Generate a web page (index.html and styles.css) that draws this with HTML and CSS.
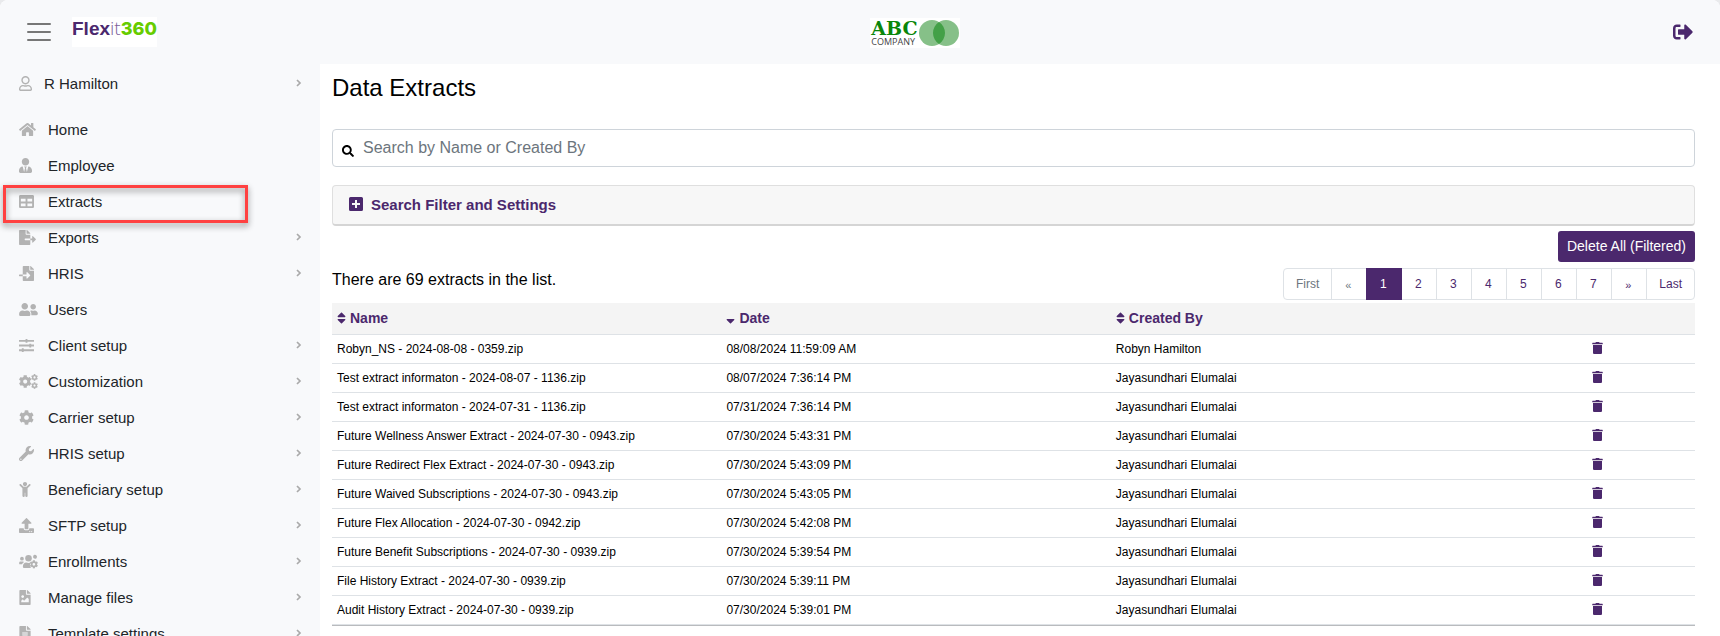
FILE: index.html
```html
<!DOCTYPE html>
<html lang="en">
<head>
<meta charset="utf-8">
<meta name="viewport" content="width=device-width, initial-scale=1">
<title>Data Extracts</title>
<link rel="stylesheet" href="styles.css">
</head>
<body>
<svg class="sprite" aria-hidden="true">
  <symbol id="i-user" viewBox="0 0 448 512"><path d="M313.6 304c-28.7 0-42.5 16-89.6 16-47.1 0-60.8-16-89.6-16C60.2 304 0 364.2 0 438.4V464c0 26.5 21.5 48 48 48h352c26.5 0 48-21.5 48-48v-25.6c0-74.2-60.2-134.4-134.4-134.4zM400 464H48v-25.6c0-47.6 38.8-86.4 86.4-86.4 14.6 0 38.3 16 89.6 16 51.7 0 74.9-16 89.6-16 47.6 0 86.4 38.8 86.4 86.4V464zM224 288c79.5 0 144-64.5 144-144S303.5 0 224 0 80 64.5 80 144s64.5 144 144 144zm0-240c52.9 0 96 43.1 96 96s-43.1 96-96 96-96-43.1-96-96 43.1-96 96-96z"/></symbol>
  <symbol id="i-home" viewBox="0 0 576 512"><path d="M280.37 148.26L96 300.11V464a16 16 0 0 0 16 16l112.06-.29a16 16 0 0 0 15.92-16V368a16 16 0 0 1 16-16h64a16 16 0 0 1 16 16v95.64a16 16 0 0 0 16 16.05L464 480a16 16 0 0 0 16-16V300L295.67 148.26a12.19 12.19 0 0 0-15.3 0zM571.6 251.47L488 182.56V44.05a12 12 0 0 0-12-12h-56a12 12 0 0 0-12 12v72.61L318.47 43a48 48 0 0 0-61 0L4.34 251.47a12 12 0 0 0-1.6 16.9l25.5 31A12 12 0 0 0 45.15 301l235.22-193.74a12.19 12.19 0 0 1 15.3 0L530.9 301a12 12 0 0 0 16.9-1.6l25.5-31a12 12 0 0 0-1.7-16.93z"/></symbol>
  <symbol id="i-tie" viewBox="0 0 448 512"><path d="M224 256c70.7 0 128-57.3 128-128S294.7 0 224 0 96 57.3 96 128s57.3 128 128 128zm95.8 32.6L272 480l-32-136 32-56h-96l32 56-32 136-47.8-191.4C56.9 292 0 350.3 0 422.4V464c0 26.5 21.5 48 48 48h352c26.5 0 48-21.5 48-48v-41.6c0-72.1-56.9-130.4-128.2-133.8z"/></symbol>
  <symbol id="i-table" viewBox="0 0 512 512"><path d="M464 32H48C21.49 32 0 53.49 0 80v352c0 26.51 21.49 48 48 48h416c26.51 0 48-21.49 48-48V80c0-26.51-21.49-48-48-48zM224 416H64v-96h160v96zm0-160H64v-96h160v96zm224 160H288v-96h160v96zm0-160H288v-96h160v96z"/></symbol>
  <symbol id="i-export" viewBox="0 0 576 512"><path d="M384 121.9c0-6.3-2.5-12.4-7-16.9L279.1 7c-4.5-4.5-10.6-7-17-7H256v128h128zM571 308l-95.7-96.4c-10.1-10.1-27.4-3-27.4 11.3V288h-64v64h64v65.2c0 14.3 17.3 21.4 27.4 11.3L571 332c6.6-6.6 6.6-17.4 0-24zm-379 28v-32c0-8.8 7.2-16 16-16h176V160H248c-13.2 0-24-10.8-24-24V0H24C10.7 0 0 10.7 0 24v464c0 13.3 10.7 24 24 24h336c13.3 0 24-10.7 24-24V352H208c-8.8 0-16-7.2-16-16z"/></symbol>
  <symbol id="i-import" viewBox="0 0 512 512"><path d="M16 288c-8.8 0-16 7.2-16 16v32c0 8.8 7.2 16 16 16h112v-64zm489-183L407.1 7c-4.5-4.5-10.6-7-17-7H384v128h128v-6.1c0-6.3-2.5-12.4-7-16.9zm-153 31V0H152c-13.3 0-24 10.7-24 24v264h128v-65.2c0-14.3 17.3-21.4 27.4-11.3L379 308c6.6 6.7 6.6 17.4 0 24l-95.7 96.4c-10.1 10.1-27.4 3-27.4-11.3V352H128v136c0 13.3 10.7 24 24 24h336c13.3 0 24-10.7 24-24V160H376c-13.2 0-24-10.8-24-24z"/></symbol>
  <symbol id="i-users" viewBox="0 0 640 512"><path d="M192 256c61.9 0 112-50.1 112-112S253.9 32 192 32 80 82.1 80 144s50.1 112 112 112zm76.8 32h-8.3c-20.8 10-43.9 16-68.5 16s-47.6-6-68.5-16h-8.3C51.6 288 0 339.6 0 403.2V432c0 26.5 21.5 48 48 48h288c26.5 0 48-21.5 48-48v-28.8c0-63.6-51.6-115.2-115.2-115.2zM480 256c53 0 96-43 96-96s-43-96-96-96-96 43-96 96 43 96 96 96zm48 32h-3.8c-13.9 4.8-28.6 8-44.2 8s-30.3-3.2-44.2-8H432c-20.4 0-39.2 5.9-55.7 15.4 24.4 26.3 39.7 61.2 39.7 99.8v38.4c0 2.2-.5 4.3-.6 6.4H592c26.5 0 48-21.5 48-48 0-61.9-50.1-112-112-112z"/></symbol>
  <symbol id="i-sliders" viewBox="0 0 512 512"><path d="M0 64h224V32h64v32h224v64H288v32h-64v-32H0zM0 224h352v-32h64v32h96v64h-96v32h-64v-32H0zM0 384h96v-32h64v32h352v64H160v32H96v-32H0z"/></symbol>
  <symbol id="i-cog" viewBox="0 0 512 512"><path id="p-cog" d="M487.4 315.7l-42.6-24.6c4.3-23.2 4.3-47 0-70.2l42.6-24.6c4.9-2.8 7.1-8.6 5.5-14-11.1-35.6-30-67.8-54.7-94.6-3.8-4.1-10-5.1-14.8-2.3L380.8 110c-17.9-15.4-38.5-27.3-60.8-35.1V25.8c0-5.6-3.9-10.5-9.4-11.7-36.7-8.2-74.3-7.8-109.2 0-5.5 1.2-9.4 6.1-9.4 11.7V75c-22.2 7.9-42.8 19.8-60.8 35.1L88.7 85.5c-4.9-2.8-11-1.9-14.8 2.3-24.7 26.7-43.6 58.9-54.7 94.6-1.7 5.4.6 11.2 5.5 14L67.3 221c-4.3 23.2-4.3 47 0 70.2l-42.6 24.6c-4.9 2.8-7.1 8.6-5.5 14 11.1 35.6 30 67.8 54.7 94.6 3.8 4.1 10 5.1 14.8 2.3l42.6-24.6c17.9 15.4 38.5 27.3 60.8 35.1v49.2c0 5.6 3.9 10.5 9.4 11.7 36.7 8.2 74.3 7.8 109.2 0 5.5-1.2 9.4-6.1 9.4-11.7v-49.2c22.2-7.9 42.8-19.8 60.8-35.1l42.6 24.6c4.9 2.8 11 1.9 14.8-2.3 24.7-26.7 43.6-58.9 54.7-94.6 1.5-5.5-.7-11.3-5.6-14.1zM256 336c-44.1 0-80-35.9-80-80s35.9-80 80-80 80 35.9 80 80-35.9 80-80 80z"/></symbol>
  <symbol id="i-cogs" viewBox="0 0 640 512"><use href="#p-cog" transform="translate(-15 32) scale(.87)"/><use href="#p-cog" transform="translate(408 0) scale(.46)"/><use href="#p-cog" transform="translate(408 278) scale(.46)"/></symbol>
  <symbol id="i-wrench" viewBox="0 0 512 512"><path d="M507.73 109.1c-2.24-9.03-13.54-12.09-20.12-5.51l-74.36 74.36-67.88-11.31-11.31-67.88 74.36-74.36c6.62-6.62 3.43-17.9-5.66-20.16-47.38-11.74-99.55.91-136.58 37.93-39.64 39.64-50.55 97.1-34.05 147.2L18.74 402.76c-24.99 24.99-24.99 65.51 0 90.5 24.99 24.99 65.51 24.99 90.5 0l213.21-213.21c50.12 16.71 107.47 5.68 147.37-34.22 37.07-37.07 49.7-89.32 37.91-136.73zM64 472c-13.25 0-24-10.75-24-24 0-13.26 10.75-24 24-24s24 10.74 24 24c0 13.25-10.75 24-24 24z"/></symbol>
  <symbol id="i-child" viewBox="0 0 384 512"><path d="M120 72c0-39.765 32.235-72 72-72s72 32.235 72 72c0 39.764-32.235 72-72 72s-72-32.236-72-72zm254.627 1.373c-12.496-12.497-32.758-12.497-45.254 0L242.745 160H141.254L54.627 73.373c-12.496-12.497-32.758-12.497-45.254 0-12.497 12.497-12.497 32.758 0 45.255L104 213.254V480c0 17.673 14.327 32 32 32h16c17.673 0 32-14.327 32-32V368h16v112c0 17.673 14.327 32 32 32h16c17.673 0 32-14.327 32-32V213.254l94.627-94.627c12.497-12.496 12.497-32.757 0-45.254z"/></symbol>
  <symbol id="i-upload" viewBox="0 0 512 512"><path d="M296 384h-80c-13.3 0-24-10.7-24-24V192h-87.7c-17.8 0-26.7-21.5-14.1-34.1L242.3 5.7c7.5-7.5 19.8-7.5 27.3 0l152.2 152.2c12.6 12.6 3.7 34.1-14.1 34.1H320v168c0 13.3-10.7 24-24 24zm216-8v112c0 13.3-10.7 24-24 24H24c-13.3 0-24-10.7-24-24V376c0-13.3 10.7-24 24-24h136v8c0 30.9 25.1 56 56 56h80c30.9 0 56-25.1 56-56v-8h136c13.3 0 24 10.7 24 24zm-124 88c0-11-9-20-20-20s-20 9-20 20 9 20 20 20 20-9 20-20zm64 0c0-11-9-20-20-20s-20 9-20 20 9 20 20 20 20-9 20-20z"/></symbol>
  <symbol id="i-userscog" viewBox="0 0 640 512"><circle cx="96" cy="160" r="64"/><circle cx="320" cy="144" r="112"/><path d="M0 320c0-53 20-64 64-64h64c18 0 34 7 45 19-40 22-68 61-74 77H32c-18 0-32-14-32-32z"/><path d="M480 64a64 64 0 0 1 122 60c-10 26-30 36-58 36-30-4-60-14-64-40z"/><path d="M128 432c0-86 40-144 115-144 47 22 107 22 154 0-40 60-40 140 10 192H176c-26 0-48-20-48-48z"/><use href="#p-cog" transform="translate(358 206) scale(.57)"/></symbol>
  <symbol id="i-image" viewBox="0 0 384 512"><path d="M384 121.941V128H256V0h6.059a24 24 0 0 1 16.97 7.029l97.941 97.941a24.002 24.002 0 0 1 7.03 16.971zM248 160c-13.2 0-24-10.8-24-24V0H24C10.745 0 0 10.745 0 24v464c0 13.255 10.745 24 24 24h336c13.255 0 24-10.745 24-24V160H248zm-135.455 16c26.51 0 48 21.49 48 48s-21.49 48-48 48-48-21.49-48-48 21.491-48 48-48zm208 240h-256l.485-48.485L104.545 328c4.686-4.686 11.799-4.201 16.485.485L160.545 368 264.06 264.485c4.686-4.686 12.284-4.686 16.971 0L320.545 304v112z"/></symbol>
  <symbol id="i-file" viewBox="0 0 384 512"><path d="M224 136V0H24C10.7 0 0 10.7 0 24v464c0 13.3 10.7 24 24 24h336c13.3 0 24-10.7 24-24V160H248c-13.2 0-24-10.8-24-24zm64 236c0 6.6-5.4 12-12 12H108c-6.6 0-12-5.4-12-12v-8c0-6.6 5.4-12 12-12h168c6.6 0 12 5.4 12 12v8zm0-64c0 6.6-5.4 12-12 12H108c-6.6 0-12-5.4-12-12v-8c0-6.6 5.4-12 12-12h168c6.6 0 12 5.4 12 12v8zm0-72v8c0 6.6-5.4 12-12 12H108c-6.6 0-12-5.4-12-12v-8c0-6.6 5.4-12 12-12h168c6.6 0 12 5.4 12 12zm96-114.1v6.1H256V0h6.1c6.4 0 12.5 2.5 17 7l97.9 98c4.5 4.5 7 10.6 7 16.9z"/></symbol>
  <symbol id="i-chev" viewBox="0 0 6 8"><path d="M1 1l3 3-3 3" fill="none" stroke="currentColor" stroke-width="1.7"/></symbol>
  <symbol id="i-out" viewBox="0 0 512 512"><path d="M497 273L329 441c-15 15-41 4.5-41-17v-96H152c-13.3 0-24-10.7-24-24v-96c0-13.3 10.7-24 24-24h136V88c0-21.4 25.9-32 41-17l168 168c9.3 9.4 9.3 24.6 0 34zM192 436v-40c0-6.6-5.4-12-12-12H96c-17.7 0-32-14.3-32-32V160c0-17.7 14.3-32 32-32h84c6.6 0 12-5.4 12-12V76c0-6.6-5.4-12-12-12H96c-53 0-96 43-96 96v192c0 53 43 96 96 96h84c6.6 0 12-5.4 12-12z"/></symbol>
  <symbol id="i-search" viewBox="0 0 512 512"><path d="M505 442.7L405.3 343c-4.5-4.5-10.6-7-17-7H372c27.6-35.3 44-79.7 44-128C416 93.1 322.9 0 208 0S0 93.1 0 208s93.1 208 208 208c48.3 0 92.7-16.4 128-44v16.3c0 6.4 2.5 12.5 7 17l99.7 99.7c9.4 9.4 24.6 9.4 33.9 0l28.3-28.3c9.4-9.4 9.4-24.6.1-34zM208 336c-70.7 0-128-57.2-128-128 0-70.7 57.2-128 128-128 70.7 0 128 57.2 128 128 0 70.7-57.2 128-128 128z"/></symbol>
  <symbol id="i-plus" viewBox="0 0 14 14"><path fill-rule="evenodd" d="M1.500 0h11a1.500 1.500 0 0 1 1.500 1.500v11a1.500 1.500 0 0 1-1.500 1.500h-11a1.500 1.500 0 0 1-1.500-1.500v-11a1.500 1.500 0 0 1 1.500-1.500zM6 3v3H3v2h3v3h2V8h3V6H8V3z"/></symbol>
  <symbol id="i-sort" viewBox="0 0 320 512"><path d="M41 288h238c21.4 0 32.1 25.9 17 41L177 448c-9.4 9.4-24.6 9.4-33.9 0L24 329c-15.1-15.1-4.4-41 17-41zm255-105L177 64c-9.4-9.4-24.6-9.4-33.9 0L24 183c-15.1 15.1-4.4 41 17 41h238c21.4 0 32.1-25.9 17-41z"/></symbol>
  <symbol id="i-sortdown" viewBox="0 0 320 512"><path d="M41 288h238c21.4 0 32.1 25.9 17 41L177 448c-9.4 9.4-24.6 9.4-33.9 0L24 329c-15.1-15.1-4.4-41 17-41z"/></symbol>
  <symbol id="i-trash" viewBox="0 0 448 512"><path d="M32 464a48 48 0 0 0 48 48h288a48 48 0 0 0 48-48V128H32zM432 32H312l-9.4-18.7A24 24 0 0 0 281.1 0H166.8a23.72 23.72 0 0 0-21.4 13.3L136 32H16A16 16 0 0 0 0 48v32a16 16 0 0 0 16 16h416a16 16 0 0 0 16-16V48a16 16 0 0 0-16-16z"/></symbol>
</svg>

<div class="app">
  <header class="topbar">
    <div class="brand-group">
      <button class="menu-btn" type="button" aria-label="Toggle menu"><span></span><span></span><span></span></button>
      <a class="brand" href="#"><span class="brand-flex">Flex</span><span class="brand-it">it</span><span class="brand-360">360</span></a>
    </div>
    <div class="client">
      <div class="client-name"><span class="client-abc">ABC</span><span class="client-company">COMPANY</span></div>
      <svg class="client-mark" viewBox="0 0 40 26" aria-hidden="true"><circle cx="13" cy="13" r="13"/><circle cx="27" cy="13" r="13"/><path d="M20 2.05a13 13 0 0 1 0 21.9a13 13 0 0 1 0-21.9z"/></svg>
    </div>
    <a class="logout" href="#" aria-label="Log out"><svg class="icon-out"><use href="#i-out"/></svg></a>
  </header>

  <div class="body">
    <nav class="sidebar">
      <a class="nav-item profile" href="#"><svg class="nav-icon w13"><use href="#i-user"/></svg><span class="nav-label">R Hamilton</span><svg class="chev"><use href="#i-chev"/></svg></a>
      <a class="nav-item" href="#"><svg class="nav-icon w17"><use href="#i-home"/></svg><span class="nav-label">Home</span></a>
      <a class="nav-item" href="#"><svg class="nav-icon w13"><use href="#i-tie"/></svg><span class="nav-label">Employee</span></a>
      <a class="nav-item marked" href="#"><svg class="nav-icon w15"><use href="#i-table"/></svg><span class="nav-label">Extracts</span></a>
      <a class="nav-item" href="#"><svg class="nav-icon w17"><use href="#i-export"/></svg><span class="nav-label">Exports</span><svg class="chev"><use href="#i-chev"/></svg></a>
      <a class="nav-item" href="#"><svg class="nav-icon w15"><use href="#i-import"/></svg><span class="nav-label">HRIS</span><svg class="chev"><use href="#i-chev"/></svg></a>
      <a class="nav-item" href="#"><svg class="nav-icon w19"><use href="#i-users"/></svg><span class="nav-label">Users</span></a>
      <a class="nav-item" href="#"><svg class="nav-icon w15"><use href="#i-sliders"/></svg><span class="nav-label">Client setup</span><svg class="chev"><use href="#i-chev"/></svg></a>
      <a class="nav-item" href="#"><svg class="nav-icon w19"><use href="#i-cogs"/></svg><span class="nav-label">Customization</span><svg class="chev"><use href="#i-chev"/></svg></a>
      <a class="nav-item" href="#"><svg class="nav-icon w15"><use href="#i-cog"/></svg><span class="nav-label">Carrier setup</span><svg class="chev"><use href="#i-chev"/></svg></a>
      <a class="nav-item" href="#"><svg class="nav-icon w15"><use href="#i-wrench"/></svg><span class="nav-label">HRIS setup</span><svg class="chev"><use href="#i-chev"/></svg></a>
      <a class="nav-item" href="#"><svg class="nav-icon w11"><use href="#i-child"/></svg><span class="nav-label">Beneficiary setup</span><svg class="chev"><use href="#i-chev"/></svg></a>
      <a class="nav-item" href="#"><svg class="nav-icon w15"><use href="#i-upload"/></svg><span class="nav-label">SFTP setup</span><svg class="chev"><use href="#i-chev"/></svg></a>
      <a class="nav-item" href="#"><svg class="nav-icon w19"><use href="#i-userscog"/></svg><span class="nav-label">Enrollments</span><svg class="chev"><use href="#i-chev"/></svg></a>
      <a class="nav-item" href="#"><svg class="nav-icon w11"><use href="#i-image"/></svg><span class="nav-label">Manage files</span><svg class="chev"><use href="#i-chev"/></svg></a>
      <a class="nav-item" href="#"><svg class="nav-icon w11"><use href="#i-file"/></svg><span class="nav-label">Template settings</span><svg class="chev"><use href="#i-chev"/></svg></a>
    </nav>

    <main class="content">
      <h1>Data Extracts</h1>
      <label class="search"><svg class="icon-search" aria-hidden="true"><use href="#i-search"/></svg><input type="text" aria-label="Search by Name or Created By" placeholder="Search by Name or Created By"></label>
      <button class="filter" type="button"><svg class="icon-plus" aria-hidden="true"><use href="#i-plus"/></svg><span>Search Filter and Settings</span></button>
      <div class="actions"><button class="delete-all" type="button">Delete All (Filtered)</button></div>
      <div class="list-head">
        <p class="count">There are 69 extracts in the list.</p>
        <nav class="pager" aria-label="Pages">
          <a class="off" href="#">First</a><a class="off arrow" href="#">«</a><a class="on" href="#">1</a><a href="#">2</a><a href="#">3</a><a href="#">4</a><a href="#">5</a><a href="#">6</a><a href="#">7</a><a class="arrow" href="#">»</a><a href="#">Last</a>
        </nav>
      </div>
      <table class="extracts">
        <colgroup><col class="wide"><col class="wide"><col class="wide"><col></colgroup>
        <thead><tr>
          <th><a href="#"><svg class="icon-sort"><use href="#i-sort"/></svg>Name</a></th>
          <th><a href="#"><svg class="icon-sort"><use href="#i-sortdown"/></svg>Date</a></th>
          <th><a href="#"><svg class="icon-sort"><use href="#i-sort"/></svg>Created By</a></th>
          <th></th>
        </tr></thead>
        <tbody>
          <tr><td>Robyn_NS - 2024-08-08 - 0359.zip</td><td>08/08/2024 11:59:09 AM</td><td>Robyn Hamilton</td><td><button class="trash" type="button" aria-label="Delete"><svg class="icon-trash"><use href="#i-trash"/></svg></button></td></tr>
          <tr><td>Test extract informaton - 2024-08-07 - 1136.zip</td><td>08/07/2024 7:36:14 PM</td><td>Jayasundhari Elumalai</td><td><button class="trash" type="button" aria-label="Delete"><svg class="icon-trash"><use href="#i-trash"/></svg></button></td></tr>
          <tr><td>Test extract informaton - 2024-07-31 - 1136.zip</td><td>07/31/2024 7:36:14 PM</td><td>Jayasundhari Elumalai</td><td><button class="trash" type="button" aria-label="Delete"><svg class="icon-trash"><use href="#i-trash"/></svg></button></td></tr>
          <tr><td>Future Wellness Answer Extract - 2024-07-30 - 0943.zip</td><td>07/30/2024 5:43:31 PM</td><td>Jayasundhari Elumalai</td><td><button class="trash" type="button" aria-label="Delete"><svg class="icon-trash"><use href="#i-trash"/></svg></button></td></tr>
          <tr><td>Future Redirect Flex Extract - 2024-07-30 - 0943.zip</td><td>07/30/2024 5:43:09 PM</td><td>Jayasundhari Elumalai</td><td><button class="trash" type="button" aria-label="Delete"><svg class="icon-trash"><use href="#i-trash"/></svg></button></td></tr>
          <tr><td>Future Waived Subscriptions - 2024-07-30 - 0943.zip</td><td>07/30/2024 5:43:05 PM</td><td>Jayasundhari Elumalai</td><td><button class="trash" type="button" aria-label="Delete"><svg class="icon-trash"><use href="#i-trash"/></svg></button></td></tr>
          <tr><td>Future Flex Allocation - 2024-07-30 - 0942.zip</td><td>07/30/2024 5:42:08 PM</td><td>Jayasundhari Elumalai</td><td><button class="trash" type="button" aria-label="Delete"><svg class="icon-trash"><use href="#i-trash"/></svg></button></td></tr>
          <tr><td>Future Benefit Subscriptions - 2024-07-30 - 0939.zip</td><td>07/30/2024 5:39:54 PM</td><td>Jayasundhari Elumalai</td><td><button class="trash" type="button" aria-label="Delete"><svg class="icon-trash"><use href="#i-trash"/></svg></button></td></tr>
          <tr><td>File History Extract - 2024-07-30 - 0939.zip</td><td>07/30/2024 5:39:11 PM</td><td>Jayasundhari Elumalai</td><td><button class="trash" type="button" aria-label="Delete"><svg class="icon-trash"><use href="#i-trash"/></svg></button></td></tr>
          <tr><td>Audit History Extract - 2024-07-30 - 0939.zip</td><td>07/30/2024 5:39:01 PM</td><td>Jayasundhari Elumalai</td><td><button class="trash" type="button" aria-label="Delete"><svg class="icon-trash"><use href="#i-trash"/></svg></button></td></tr>
        </tbody>
      </table>
    </main>
  </div>
</div>
</body>
</html>
```
FILE: styles.css
```css
:root {
  --purple: #4b286d;
  --panel: #f8f9fb;
  --line: #dee2e6;
  --icon: #b3b3b3;
}
*, *::before, *::after { box-sizing: border-box; }
body {
  margin: 0;
  background: #e9eaec;
  color: #000;
  font-family: "Liberation Sans", Arial, sans-serif;
  font-size: 16px;
}
a { color: inherit; text-decoration: none; }
button { font-family: inherit; cursor: pointer; }
svg { fill: currentColor; flex: none; }
.sprite { position: absolute; width: 0; height: 0; }

.app {
  display: flex;
  flex-direction: column;
  height: 100vh;
  overflow: hidden;
  background: #fff;
  border-radius: 8px 8px 0 0;
}

/* Top bar */
.topbar {
  display: flex;
  flex: none;
  justify-content: space-between;
  align-items: flex-start;
  height: 64px;
  padding: 0 27px;
  background: var(--panel);
}
.brand-group { display: flex; gap: 21px; }
.menu-btn {
  display: flex;
  flex-direction: column;
  gap: 6px;
  margin-top: 23px;
  padding: 0;
  width: 24px;
  border: 0;
  background: none;
}
.menu-btn span { height: 2px; border-radius: 1px; background: #777; }
.brand {
  display: flex;
  align-items: baseline;
  height: 30px;
  margin-top: 17px;
  background: #fff;
  font-size: 19px;
  line-height: 22px;
  white-space: nowrap;
}
.brand-flex { color: var(--purple); font-weight: 700; }
.brand-it { color: #7d5f9b; font-family: "Open Sans", sans-serif; font-weight: 300; }
.brand-360 { color: #6c0; font-family: Inter, sans-serif; font-size: 18px; font-weight: 800; }
.client {
  display: flex;
  align-items: center;
  gap: 1px;
  height: 30px;
  margin-top: 18px;
  padding: 0 1px;
  background: #fff;
}
.client-name { display: flex; flex-direction: column; }
.client-abc {
  color: #0a860a;
  font-family: "DejaVu Serif", serif;
  font-size: 19px;
  font-weight: 700;
  line-height: 18px;
}
.client-company {
  color: #444;
  font-family: "Open Sans", sans-serif;
  font-size: 9px;
  line-height: 10px;
}
.client-mark { width: 40px; height: 26px; fill: #86c088; }
.client-mark path { fill: #43a047; }
.logout { margin-top: 22px; height: 20px; color: var(--purple); }
.icon-out { display: block; width: 20px; height: 20px; }

.body { display: flex; flex: 1; min-height: 0; }

/* Sidebar */
.sidebar {
  flex: 0 0 320px;
  overflow: hidden;
  background: var(--panel);
}
.nav-item {
  display: grid;
  grid-template-columns: 29px 1fr auto;
  align-items: center;
  height: 36px;
  padding: 0 18px 0 19px;
  color: #212529;
  font-size: 15px;
}
.profile {
  grid-template-columns: 25px 1fr auto;
  height: 38px;
  margin-bottom: 9px;
}
.nav-icon { height: 15px; color: var(--icon); }
.w11 { width: 12px; }
.w13 { width: 13px; }
.w15 { width: 15px; }
.w17 { width: 17px; }
.w19 { width: 19px; }
.chev { width: 6px; height: 8px; color: #aaa; }
.marked { position: relative; }
.marked::after {
  content: "";
  position: absolute;
  top: 2px;
  left: 3px;
  width: 245px;
  height: 38px;
  border: 3px solid #ff4141;
  filter: drop-shadow(0 3px 3px rgba(0, 0, 0, 0.45));
}

/* Content */
.content {
  flex: 1;
  min-width: 0;
  padding: 12px 25px 0 12px;
}
h1 {
  margin: 0 0 29px;
  font-size: 24px;
  font-weight: 400;
  line-height: 24px;
}
.search {
  display: flex;
  align-items: center;
  gap: 9px;
  height: 38px;
  padding: 0 9px;
  border: 1px solid #ced4da;
  border-radius: 4px;
}
.icon-search { width: 12px; height: 12px; margin-top: 5px; }
.search input {
  flex: 1;
  padding: 0;
  border: 0;
  outline: 0;
  background: none;
  font: inherit;
}
.search input::placeholder { color: #6c757d; opacity: 1; }
.filter {
  display: flex;
  align-items: center;
  gap: 8px;
  width: 100%;
  height: 41px;
  margin: 18px 0 5px;
  padding: 0 16px 2px;
  border: 1px solid #dfdfdf;
  border-bottom: 2px solid #d5d5d5;
  border-radius: 4px;
  background: #f7f7f7;
  color: var(--purple);
  font-size: 15px;
  font-weight: 700;
}
.icon-plus { width: 14px; height: 14px; }
.actions { display: flex; justify-content: flex-end; }
.delete-all {
  height: 31px;
  padding: 0 9px 2px;
  border: 0;
  border-radius: 3px;
  background: var(--purple);
  color: #fff;
  font-size: 14px;
}
.list-head {
  display: flex;
  justify-content: space-between;
  align-items: flex-start;
  margin: 6px 0 3px;
}
.count { margin: 0; line-height: 24px; }
.pager { display: flex; padding-left: 1px; }
.pager a {
  display: flex;
  align-items: center;
  justify-content: center;
  min-width: 36px;
  height: 32px;
  margin-left: -1px;
  padding: 0 13px 0 11px;
  border: 1px solid var(--line);
  color: var(--purple);
  font-size: 12px;
}
.pager a:first-child { padding: 0 12px; border-radius: 4px 0 0 4px; }
.pager a:last-child { padding: 0 12px; border-radius: 0 4px 4px 0; }
.pager .arrow { padding-top: 2px; font-size: 11px; }
.pager .off { color: #6c757d; }
.pager .on { position: relative; border-color: var(--purple); background: var(--purple); color: #fff; }

.extracts {
  width: 100%;
  table-layout: fixed;
  border-collapse: separate;
  border-spacing: 0;
  border-bottom: 1px solid #b9bbbe;
  font-size: 12px;
}
.wide { width: calc(200% / 7); }
.extracts th {
  height: 32px;
  padding: 0 5px 2px;
  border-bottom: 1px solid var(--line);
  background: #f4f4f4;
  color: var(--purple);
  font-size: 14px;
  text-align: left;
}
.extracts th a { display: flex; align-items: center; gap: 4px; }
.icon-sort { width: 9px; height: 14px; }
.extracts td {
  height: 29px;
  padding: 0 5px;
  border-bottom: 1px solid var(--line);
}
.extracts td:last-child { text-align: center; }
.trash {
  padding: 0 0 2px;
  border: 0;
  background: none;
  color: var(--purple);
  vertical-align: middle;
}
.icon-trash { display: block; width: 11px; height: 12px; }
```
